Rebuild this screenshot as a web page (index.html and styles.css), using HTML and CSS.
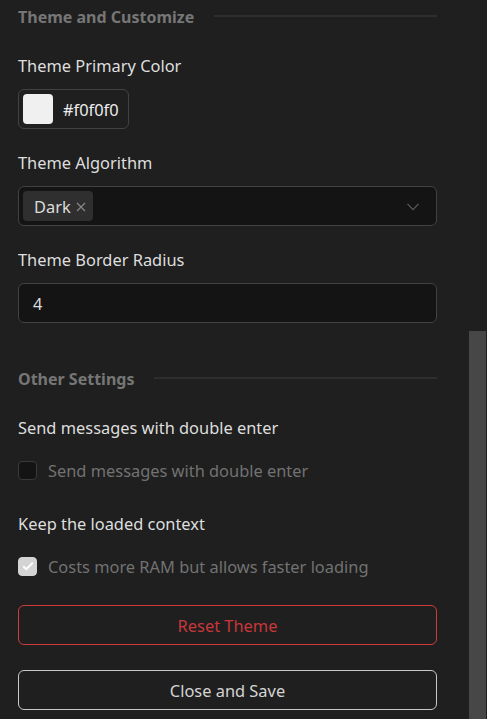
FILE: index.html
```html
<!DOCTYPE html>
<html lang="en">
<head>
<meta charset="utf-8">
<title>Settings</title>
<link rel="stylesheet" href="styles.css">
</head>
<body>
<div class="panel">
  <div class="divider divider-first"><span class="divider-text">Theme and Customize</span><span class="divider-line"></span></div>

  <div class="item">
    <div class="label">Theme Primary Color</div>
    <div class="color-picker"><span class="swatch"></span><span class="color-text">#f0f0f0</span></div>
  </div>

  <div class="item">
    <div class="label">Theme Algorithm</div>
    <div class="select">
      <span class="tag">Dark<svg class="tag-x" viewBox="0 0 10 10" width="10" height="10"><path d="M1 1L9 9M9 1L1 9" stroke="#8a8a8a" stroke-width="1.1" fill="none"/></svg></span>
      <svg class="chevron" viewBox="0 0 12 8" width="12" height="8"><path d="M0.5 0.8L6 6.6L11.5 0.8" stroke="#5c5c5c" stroke-width="1.2" fill="none"/></svg>
    </div>
  </div>

  <div class="item item-last">
    <div class="label">Theme Border Radius</div>
    <div class="input">4</div>
  </div>

  <div class="divider divider-second"><span class="divider-text">Other Settings</span><span class="divider-line"></span></div>

  <div class="item-check">
    <div class="label">Send messages with double enter</div>
    <div class="check-row"><span class="checkbox"></span><span class="check-text">Send messages with double enter</span></div>
  </div>

  <div class="item-check">
    <div class="label">Keep the loaded context</div>
    <div class="check-row"><span class="checkbox checked"><svg viewBox="0 0 12 10" width="12" height="10"><path d="M1.2 5.2L4.4 8.2L10.8 1.6" stroke="#ffffff" stroke-width="1.9" fill="none"/></svg></span><span class="check-text">Costs more RAM but allows faster loading</span></div>
  </div>

  <div class="buttons">
    <button class="btn btn-danger">Reset Theme</button>
    <button class="btn btn-default">Close and Save</button>
  </div>
</div>
<div class="scroll-thumb"></div>
</body>
</html>
```

FILE: styles.css
```css
html, body {
  margin: 0;
  padding: 0;
  background: #1f1f1f;
  height: 100%;
  overflow: hidden;
}
body {
  font-family: "Noto Sans", "Open Sans", sans-serif;
  font-size: 16.4px;
  color: #dcdcdc;
}
.panel {
  width: 419px;
  padding: 6px 0 0 18px;
  display: flex;
  flex-direction: column;
}
.divider {
  display: flex;
  align-items: center;
  height: 22px;
}
.divider-text {
  font-size: 16px;
  font-weight: 700;
  color: #767676;
  line-height: 22px;
  padding-right: 20px;
  white-space: nowrap;
}
.divider-line {
  flex: 1;
  height: 2px;
  background: #2e2e2e;
  margin-top: -2px;
}
.divider-first { margin-bottom: 27px; }
.divider-second { margin-top: 45px; margin-bottom: 27px; }
.item { display: flex; flex-direction: column; margin-bottom: 23px; }
.item-last { margin-bottom: 0; }
.label {
  line-height: 22px;
  height: 22px;
  color: #dedede;
  margin-bottom: 12px;
}
.color-picker {
  align-self: flex-start;
  height: 40px;
  box-sizing: border-box;
  border: 1px solid #424242;
  border-radius: 6px;
  display: flex;
  align-items: center;
  padding: 0 9px 0 4px;
  gap: 10px;
}
.swatch {
  width: 30px;
  height: 30px;
  border-radius: 4px;
  background: #f0f0f0;
}
.color-text { color: #ececec; }
.select, .input {
  height: 40px;
  box-sizing: border-box;
  border: 1px solid #424242;
  border-radius: 6px;
  background: #141414;
  display: flex;
  align-items: center;
}
.select { padding: 0 16px 0 4px; justify-content: space-between; }
.tag {
  height: 30px;
  background: #2f2f2f;
  border-radius: 4px;
  display: flex;
  align-items: center;
  padding: 0 7px 0 11px;
  gap: 5px;
  color: #dcdcdc;
}
.tag-x { margin-top: 1px; }
.chevron { margin-top: 2px; margin-right: 1px; }
.input { padding: 0 14px; color: #dcdcdc; }
.item-check { display: flex; flex-direction: column; margin-bottom: 20px; }
.item-check .label { margin-bottom: 20px; }
.item-check + .item-check { margin-top: 12px; }
.check-row {
  display: flex;
  align-items: center;
  gap: 11px;
  height: 22px;
}
.checkbox {
  width: 19px;
  height: 19px;
  box-sizing: border-box;
  border: 1px solid #3a3a3a;
  border-radius: 4px;
  background: #141414;
  display: flex;
  align-items: center;
  justify-content: center;
}
.checkbox.checked { background: #d4d4d4; border-color: #d4d4d4; }
.check-text { color: #727272; }
.buttons { display: flex; flex-direction: column; gap: 25px; margin-top: 8px; }
.btn {
  height: 40px;
  border-radius: 6px;
  background: transparent;
  font-family: inherit;
  font-size: 16.4px;
  cursor: pointer;
}
.btn-danger { border: 1px solid #d03a3a; color: #c8373b; }
.btn-default { border: 1px solid #c8c8c8; color: #d4d4d4; }
.scroll-thumb {
  position: absolute;
  left: 469px;
  top: 331px;
  width: 17px;
  height: 388px;
  background: #474747;
}
```
